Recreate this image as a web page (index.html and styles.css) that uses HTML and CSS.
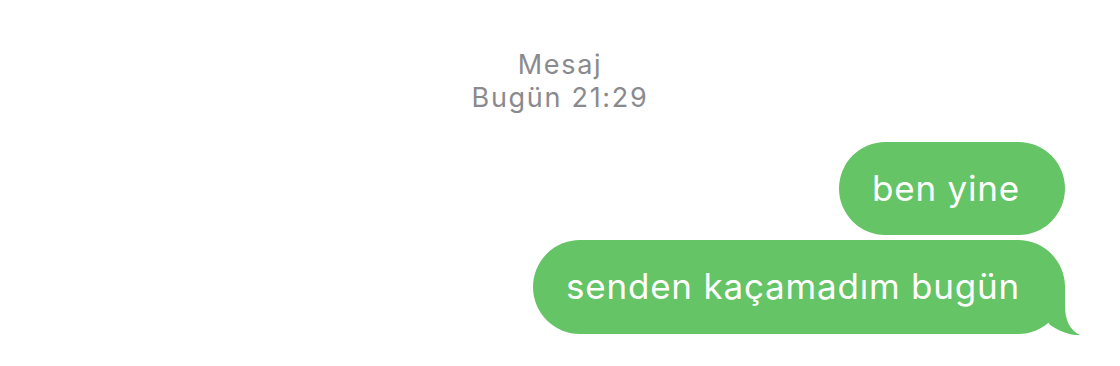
FILE: index.html
```html
<!DOCTYPE html>
<html lang="tr">
<head>
<meta charset="utf-8">
<link rel="stylesheet" href="styles.css">
</head>
<body>
<main class="chat">
  <header class="meta">
    <div class="meta-service">Mesaj</div>
    <div class="meta-time">Bugün 21:29</div>
  </header>
  <section class="thread">
    <div class="bubble">ben yine</div>
    <div class="bubble bubble-last">senden kaçamadım bugün
      <svg class="tail" width="36" height="50" viewBox="0 0 36 50" aria-hidden="true">
        <path d="M0 0 H21 V20 C21 36 26 45 36 50 C27 51 15 46 6 40 L0 30 Z" fill="#65c466"/>
      </svg>
    </div>
  </section>
</main>
</body>
</html>
```

FILE: styles.css
```css
html, body {
  margin: 0;
  padding: 0;
  background: #ffffff;
}

.chat {
  width: 1120px;
  height: 366px;
  font-family: Inter, "Noto Sans", "Liberation Sans", sans-serif;
  display: flex;
  flex-direction: column;
}

.meta {
  padding-top: 48px;
  text-align: center;
  color: #8a8a8e;
  font-size: 27px;
  font-weight: 400;
  letter-spacing: 1.7px;
  line-height: 33px;
}

.thread {
  margin-top: 28px;
  display: flex;
  flex-direction: column;
  align-items: flex-end;
  gap: 5px;
  padding-right: 55px;
}

.bubble {
  position: relative;
  background: #65c466;
  color: #ffffff;
  font-size: 35px;
  line-height: 44px;
  letter-spacing: 0.8px;
  padding: 24px 45px 25px 33px;
  border-radius: 47px;
  white-space: nowrap;
}

.bubble-last {
  padding-bottom: 26px;
}

.tail {
  position: absolute;
  right: -15px;
  bottom: -1px;
}
```
